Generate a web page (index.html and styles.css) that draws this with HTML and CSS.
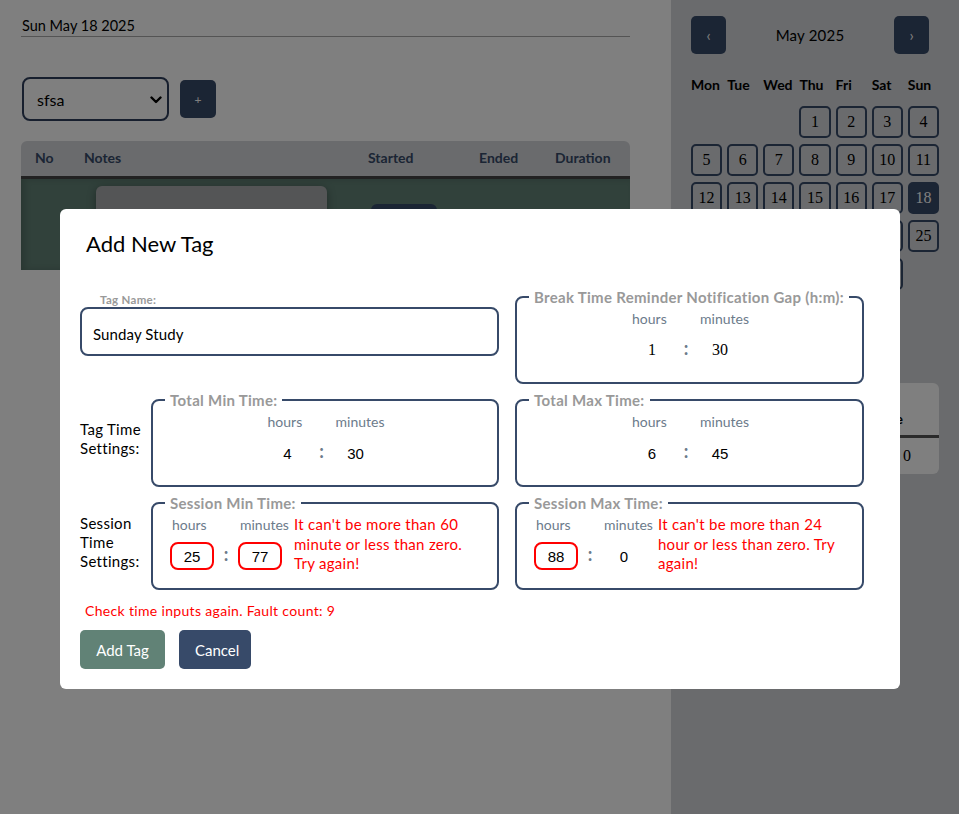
FILE: index.html
```html
<!DOCTYPE html>
<html lang="en">
<head>
<meta charset="utf-8">
<title>Tags</title>
<link rel="stylesheet" href="styles.css">
</head>
<body>
<div class="app">
  <main class="main">
    <div class="date">Sun May 18 2025</div>
    <div class="controls">
      <div class="select-wrap">
        <select class="tag-select"><option>sfsa</option></select>
        <svg class="chev" width="12" height="8" viewBox="0 0 12 8"><path d="M1.5 1.5 L6 6 L10.5 1.5" fill="none" stroke="#000" stroke-width="2.4" stroke-linecap="round" stroke-linejoin="round"/></svg>
      </div>
      <button class="add-btn">+</button>
    </div>
    <div class="sessions">
      <div class="sessions-head">
        <span>No</span><span>Notes</span><span>Started</span><span>Ended</span><span>Duration</span>
      </div>
      <div class="sessions-row">
        <span></span>
        <div class="note-box"></div>
        <div class="row-btn"></div>
      </div>
    </div>
  </main>
  <aside class="side">
    <div class="cal-head">
      <button class="cal-nav">&#8249;</button>
      <span class="cal-title">May 2025</span>
      <button class="cal-nav">&#8250;</button>
    </div>
    <div class="cal-days">
      <span>Mon</span><span>Tue</span><span>Wed</span><span>Thu</span><span>Fri</span><span>Sat</span><span>Sun</span>
    </div>
    <div class="cal-grid">
      <span class="empty"></span><span class="empty"></span><span class="empty"></span>
      <span class="day">1</span><span class="day">2</span><span class="day">3</span><span class="day">4</span>
      <span class="day">5</span><span class="day">6</span><span class="day">7</span><span class="day">8</span><span class="day">9</span><span class="day">10</span><span class="day">11</span>
      <span class="day">12</span><span class="day">13</span><span class="day">14</span><span class="day">15</span><span class="day">16</span><span class="day">17</span><span class="day today">18</span>
      <span class="day">19</span><span class="day">20</span><span class="day">21</span><span class="day">22</span><span class="day">23</span><span class="day">24</span><span class="day">25</span>
      <span class="day">26</span><span class="day">27</span><span class="day">28</span><span class="day">29</span><span class="day">30</span><span class="day">31</span>
    </div>
    <div class="sum-card">
      <div class="sum-head"><span>Time</span></div>
      <div class="sum-row"><span>0</span></div>
    </div>
  </aside>
</div>

<div class="overlay">
  <div class="modal">
    <h2 class="modal-title">Add New Tag</h2>
    <div class="form-grid">
      <div class="tag-name">
        <label class="small-label">Tag Name:</label>
        <input class="name-input" type="text" value="Sunday Study">
      </div>
      <fieldset class="box">
        <legend>Break Time Reminder Notification Gap (h:m):</legend>
        <div class="box-body">
          <div class="hm">
            <span class="unit">hours</span><span></span><span class="unit">minutes</span>
            <input class="val serif" value="1"><span class="colon">:</span><input class="val serif" value="30">
          </div>
        </div>
      </fieldset>

      <div class="pair">
        <div class="row-label">Tag Time Settings:</div>
        <fieldset class="box">
          <legend>Total Min Time:</legend>
          <div class="box-body">
            <div class="hm">
              <span class="unit">hours</span><span></span><span class="unit">minutes</span>
              <input class="val" value="4"><span class="colon">:</span><input class="val" value="30">
            </div>
          </div>
        </fieldset>
      </div>
      <fieldset class="box">
        <legend>Total Max Time:</legend>
        <div class="box-body">
          <div class="hm">
            <span class="unit">hours</span><span></span><span class="unit">minutes</span>
            <input class="val" value="6"><span class="colon">:</span><input class="val" value="45">
          </div>
        </div>
      </fieldset>

      <div class="pair">
        <div class="row-label">Session Time Settings:</div>
        <fieldset class="box">
          <legend>Session Min Time:</legend>
          <div class="box-body">
            <div class="hm">
              <span class="unit">hours</span><span></span><span class="unit">minutes</span>
              <input class="val bad" value="25"><span class="colon">:</span><input class="val bad" value="77">
            </div>
            <p class="err">It can't be more than 60 minute or less than zero. Try again!</p>
          </div>
        </fieldset>
      </div>
      <fieldset class="box">
        <legend>Session Max Time:</legend>
        <div class="box-body">
          <div class="hm">
            <span class="unit">hours</span><span></span><span class="unit">minutes</span>
            <input class="val bad" value="88"><span class="colon">:</span><input class="val" value="0">
          </div>
          <p class="err">It can't be more than 24 hour or less than zero. Try again!</p>
        </div>
      </fieldset>
    </div>
    <p class="fault">Check time inputs again. Fault count: 9</p>
    <div class="actions">
      <button class="btn btn-add">Add Tag</button>
      <button class="btn btn-cancel">Cancel</button>
    </div>
  </div>
</div>
</body>
</html>
```

FILE: styles.css
```css
* { box-sizing: border-box; }

html, body {
  margin: 0;
  height: 100%;
}

body {
  font-family: "Lato", "DejaVu Sans", sans-serif;
  color: #000;
  background: #fff;
  overflow: hidden;
}

.app {
  display: flex;
  height: 814px;
}

/* ---------- main column ---------- */
.main {
  width: 671px;
  flex: none;
  padding: 16px 41px 0 21px;
}

.date {
  font-size: 14.5px;
  line-height: 20px;
  padding-left: 1px;
  border-bottom: 1px solid #a9a9a9;
  height: 21px;
}

.controls {
  display: flex;
  align-items: center;
  gap: 11px;
  margin-top: 40px;
  padding-left: 1px;
}

.select-wrap {
  position: relative;
  width: 147px;
  height: 44px;
}

.tag-select {
  appearance: none;
  -webkit-appearance: none;
  width: 100%;
  height: 100%;
  border: 2px solid #2f3f5c;
  border-radius: 8px;
  background: #fff;
  font-family: inherit;
  font-size: 16px;
  padding: 0 0 0 13px;
  color: #000;
}

.chev {
  position: absolute;
  right: 7px;
  top: 19px;
}

.add-btn {
  width: 36px;
  height: 38px;
  border: none;
  border-radius: 5px;
  background: #374a69;
  color: #fff;
  font-size: 12px;
  font-family: inherit;
  padding: 0;
}

.sessions {
  margin-top: 20px;
  border-radius: 6px 6px 0 0;
  overflow: hidden;
}

.sessions-head {
  display: grid;
  grid-template-columns: 49px 284px 111px 76px 1fr;
  padding-left: 14px;
  height: 38px;
  padding-bottom: 2px;
  align-items: center;
  background: #d4d6da;
  border-bottom: 3px solid #444;
  font-weight: bold;
  font-size: 14px;
  color: #374a69;
}

.sessions-row {
  display: grid;
  grid-template-columns: 75px 275px 1fr;
  height: 91px;
  background: #628276;
  box-shadow: inset 4px 0 6px rgba(0,0,0,0.15);
}

.note-box {
  margin-top: 7px;
  width: 231px;
  height: 70px;
  border-radius: 6px;
  background: #a9abad;
  box-shadow: 0 2px 8px rgba(0,0,0,0.35);
}

.row-btn {
  margin-top: 25px;
  width: 66px;
  height: 34px;
  border-radius: 6px;
  background: #374a69;
}

/* ---------- sidebar ---------- */
.side {
  flex: 1;
  background: #d4d6da;
  padding: 16px 20px 0 20px;
}

.cal-head {
  display: flex;
  align-items: center;
  justify-content: space-between;
  margin-right: 10px;
  height: 38px;
}

.cal-nav {
  width: 35px;
  height: 38px;
  border: none;
  border-radius: 5px;
  background: #374a69;
  color: #fff;
  font-size: 15px;
  font-family: inherit;
  padding: 0;
}

.cal-title {
  font-size: 15px;
  letter-spacing: 0.2px;
}

.cal-days {
  display: grid;
  grid-template-columns: repeat(7, 1fr);
  column-gap: 5px;
  margin-top: 22px;
  font-weight: bold;
  font-size: 14px;
  line-height: 18px;
  width: 248px;
}

.cal-grid {
  display: grid;
  grid-template-columns: repeat(7, 1fr);
  column-gap: 5px;
  row-gap: 6px;
  margin-top: 12px;
  width: 248px;
}

.day {
  height: 32px;
  border: 2px solid #374a69;
  border-radius: 5px;
  display: flex;
  align-items: center;
  justify-content: center;
  font-family: "Liberation Serif", serif;
  font-size: 16px;
}

.day.today {
  background: #374a69;
  color: #fff;
}

.sum-card {
  margin-top: 93px;
  width: 248px;
  background: #fff;
  border-radius: 6px;
  overflow: hidden;
}

.sum-head {
  display: flex;
  justify-content: flex-end;
  align-items: flex-end;
  height: 55px;
  padding: 0 36px 8px 12px;
  border-bottom: 3px solid #555;
  font-weight: bold;
  font-size: 14px;
}

.sum-row {
  display: flex;
  justify-content: flex-end;
  align-items: center;
  height: 36px;
  padding: 0 28px 0 12px;
  font-size: 16px;
  font-family: "Liberation Serif", serif;
}

/* ---------- modal ---------- */
.overlay {
  position: fixed;
  inset: 0;
  background: rgba(0, 0, 0, 0.5);
  padding: 209px 0 0 60px;
}

.modal {
  width: 840px;
  height: 480px;
  background: #fff;
  border-radius: 6px;
  padding: 21px 20px 20px 20px;
}

.modal-title {
  margin: 0 0 30px 6px;
  font-size: 22px;
  line-height: 28px;
  font-weight: normal;
}

.form-grid {
  display: grid;
  grid-template-columns: 419px 349px;
  column-gap: 16px;
  row-gap: 7px;
}

.tag-name {
  padding-top: 4px;
}

.small-label {
  display: block;
  font-size: 11.5px;
  letter-spacing: 0.3px;
  line-height: 15px;
  font-weight: bold;
  color: #999;
  padding-left: 20px;
}

.name-input {
  display: block;
  width: 100%;
  height: 49px;
  border: 2px solid #374a69;
  border-radius: 8px;
  padding: 4px 11px 0;
  font-family: inherit;
  font-size: 15px;
  letter-spacing: 0.1px;
  color: #000;
}

.box {
  margin: 0;
  min-width: 0;
  border: 2px solid #374a69;
  border-radius: 8px;
  padding: 0 12px;
  height: 96px;
}

.box legend {
  padding: 0 5px;
  font-size: 15px;
  letter-spacing: 0.3px;
  line-height: 18px;
  font-weight: bold;
  color: #999;
}

.box-body {
  display: flex;
  justify-content: center;
  align-items: flex-start;
  gap: 5px;
  padding: 3px 5px 0;
}

.hm {
  display: grid;
  grid-template-columns: 44px 24px auto;
  grid-template-rows: 20px 28px;
  row-gap: 7px;
  flex: none;
}

.unit {
  font-size: 14px;
  line-height: 20px;
  color: #6c7b8b;
  padding-left: 2px;
  white-space: nowrap;
}

.val {
  width: 44px;
  height: 28px;
  border: 2px solid transparent;
  border-radius: 8px;
  text-align: center;
  font-family: "Liberation Sans", sans-serif;
  font-size: 15px;
  color: #000;
  padding: 0;
  background: #fff;
}

.val.serif {
  font-family: "Liberation Serif", serif;
  font-size: 16px;
}

.val.bad {
  border-color: #ff0000;
}

.colon {
  text-align: center;
  font-weight: bold;
  font-size: 18px;
  line-height: 24px;
  color: #6c7b8b;
}

.err {
  flex: 1;
  margin: 0;
  color: #ff0000;
  font-size: 15px;
  letter-spacing: 0.3px;
  line-height: 19.5px;
}

.pair {
  display: flex;
  align-items: center;
}

.row-label {
  width: 71px;
  flex: none;
  font-size: 15px;
  letter-spacing: 0.3px;
  line-height: 19px;
}

.pair .box {
  flex: 1;
}

.fault {
  margin: 11px 0 0 5px;
  color: #ff0000;
  font-size: 14px;
  letter-spacing: 0.33px;
  line-height: 20px;
}

.actions {
  display: flex;
  gap: 14px;
  margin-top: 9px;
}

.btn {
  height: 39px;
  border: none;
  border-radius: 5px;
  color: #fff;
  font-family: inherit;
  font-size: 15px;
  padding: 0 16px;
}

.btn-add { background: #618276; width: 85px; }
.btn-cancel { background: #374a69; width: 72px; }
```
